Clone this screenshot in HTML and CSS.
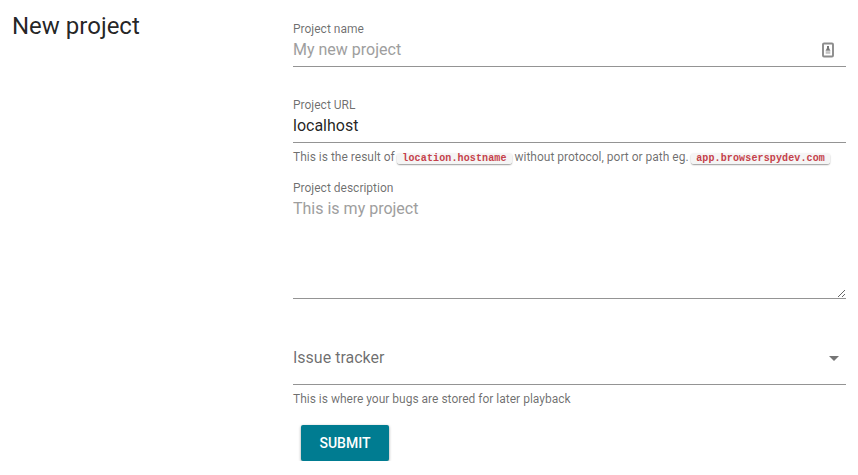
FILE: index.html
```html
<!DOCTYPE html>
<html lang="en">
<head>
<meta charset="utf-8">
<title>New project</title>
<link rel="stylesheet" href="styles.css">
</head>
<body>
<main class="page">
  <h1 class="title">New project</h1>
  <form class="form">
    <div class="field name">
      <label class="label" for="name">Project name</label>
      <div class="row">
        <input class="input" id="name" placeholder="My new project">
        <svg class="key" viewBox="0 0 12 16" width="12" height="16"><rect x="1" y="1.5" width="10" height="13" rx="1" fill="none" stroke="#8c8c8c" stroke-width="1.9"/><path d="M5 4h2v2l1 2H4l1-2z" fill="#757575"/><path d="M3.7 8.2h4.6v1.2H3.7z" fill="#8c8c8c"/><path d="M3.7 9.8h4.6v2H3.7z" fill="#c2c2c2"/></svg>
      </div>
    </div>
    <div class="field url">
      <label class="label" for="url">Project URL</label>
      <div class="row"><input class="input" id="url" value="localhost"></div>
    </div>
    <p class="hint">This is the result of <code>location.hostname</code> without protocol, port or path eg. <code>app.browserspydev.com</code></p>
    <div class="field desc">
      <label class="label" for="desc">Project description</label>
      <textarea class="area" id="desc" placeholder="This is my project"></textarea>
    </div>
    <div class="select"><span>Issue tracker</span><i class="arrow"></i></div>
    <p class="hint">This is where your bugs are stored for later playback</p>
    <button class="submit" type="button">SUBMIT</button>
  </form>
</main>
</body>
</html>
```
FILE: styles.css
```css
* { box-sizing: border-box; }
body { margin: 0; background: #fff; color: rgba(0,0,0,.87); font-family: Roboto, sans-serif; }
.page { display: grid; grid-template-columns: 281px 553px; padding: 0 12px; }
.title { margin: 10px 0 0; font-size: 24px; line-height: 32px; font-weight: 400; }
.form { display: flex; flex-direction: column; padding-top: 20px; }
.field { display: flex; flex-direction: column; border-bottom: 1px solid #949494; }
.name, .url { height: 47px; }
.url { margin-top: 29px; }
.label { height: 18px; font-size: 12px; line-height: 18px; color: rgba(0,0,0,.58); }
.row { display: flex; align-items: center; height: 24px; }
.input { flex: 1; min-width: 0; height: 24px; padding: 0; border: 0; outline: 0; background: none; color: inherit; font: 16px/24px Roboto, sans-serif; }
.input::placeholder, .area::placeholder { color: #9e9e9e; opacity: 1; }
.key { margin-right: 12px; }
.hint { height: 20px; margin: 4px 0 0; font-size: 12px; line-height: 20px; color: rgba(0,0,0,.58); white-space: nowrap; }
code { margin: 0 -.5px 0 -.8px; padding: 0 5.4px; border-radius: 3px; background: #f5f5f5; box-shadow: 0 1px 1.5px rgba(0,0,0,.4); color: #c5414a; font: bold 10px/14px "Liberation Mono", monospace; letter-spacing: .13px; }
.desc { height: 120px; margin-top: 12px; }
.area { height: 101px; padding: 0; border: 0; outline: 0; resize: vertical; color: inherit; font: 16px/24px Roboto, sans-serif; }
.select { display: flex; align-items: center; justify-content: space-between; height: 54px; margin-top: 32px; padding-right: 7px; border-bottom: 1px solid #949494; font-size: 16px; color: rgba(0,0,0,.58); }
.arrow { margin-top: 1px; border: 5px solid transparent; border-top-color: #757575; border-bottom: 0; }
.submit { width: 88px; height: 36px; margin: 16px 0 0 8px; padding: 0; border: 0; border-radius: 2px; background: #007c91; color: #fff; font: 500 14px/36px Roboto, sans-serif; box-shadow: 0 1px 3px rgba(0,0,0,.4); }
```
